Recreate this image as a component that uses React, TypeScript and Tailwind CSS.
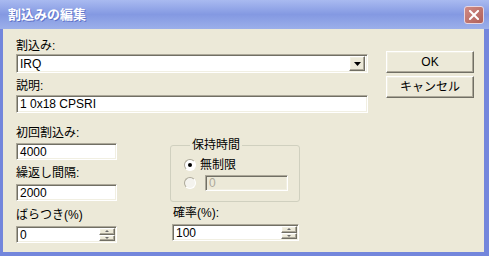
import React from "react";

const font = { fontFamily: '"Liberation Sans", "Noto Sans CJK JP", sans-serif' };

const sunken =
  "border border-t-[#ACA899] border-l-[#ACA899] border-b-white border-r-white shadow-[inset_1px_1px_0_#716F64,inset_-1px_-1px_0_#F1EFE2]";
const raised =
  "border border-t-white border-l-white border-b-[#716F64] border-r-[#716F64] shadow-[inset_-1px_-1px_0_#ACA899,inset_1px_1px_0_#F1EFE2] bg-[#ECE9D8]";

function Label({ children, className = "" }: { children: React.ReactNode; className?: string }) {
  return <div className={`h-[14px] text-[12px] leading-[14px] text-black whitespace-nowrap ${className}`}>{children}</div>;
}

function Field({ value, className = "", disabled = false, children }: any) {
  return (
    <div
      className={`flex items-center pl-[3px] text-[12px] ${disabled ? "bg-[#ECE9D8] text-[#ACA899]" : "bg-white text-black"} ${sunken} ${className}`}
    >
      <span className="flex-1 leading-[14px]">{value}</span>
      {children}
    </div>
  );
}

function Spinner() {
  return (
    <div className="mr-[1px] flex h-full w-[16px] flex-col py-[1px]">
      <div className={`flex flex-1 items-center justify-center ${raised}`}>
        <div className="h-0 w-0 border-x-[2px] border-b-[2px] border-x-transparent border-b-[#6b6b6b]" />
      </div>
      <div className={`flex flex-1 items-center justify-center ${raised}`}>
        <div className="h-0 w-0 border-x-[2px] border-t-[2px] border-x-transparent border-t-[#6b6b6b]" />
      </div>
    </div>
  );
}

function Radio({ checked = false, disabled = false }: { checked?: boolean; disabled?: boolean }) {
  return (
    <div
      className={`flex h-[12px] w-[12px] items-center justify-center rounded-full border border-t-[#ACA899] border-l-[#ACA899] border-b-white border-r-white ${disabled ? "bg-[#F4F3EE]" : "bg-white"}`}
    >
      {checked && <div className="h-[4px] w-[4px] rounded-full bg-black" />}
    </div>
  );
}

function Button({ children, className = "" }: { children: React.ReactNode; className?: string }) {
  return (
    <div className={`flex h-[22px] w-[88px] items-center justify-center text-[12px] text-black ${raised} ${className}`}>
      {children}
    </div>
  );
}

export default function App() {
  return (
    <div className="flex h-[256px] w-[489px] flex-col overflow-hidden bg-[#ECE9D8]" style={font}>
      {/* title bar */}
      <div className="flex h-[29px] items-center bg-gradient-to-b from-[#A9BAF0] via-[#8499E2] to-[#9CAFEA] pl-[8px] pr-[5px]">
        <span className="flex-1 text-[13px] font-bold text-white [text-shadow:1px_1px_0_#5F72C8]">割込みの編集</span>
        <div className="flex h-[18px] w-[20px] items-center justify-center rounded-[3px] border border-[#E8D6E0] bg-gradient-to-br from-[#D08A84] to-[#B0605A]">
          <svg width="10" height="10" viewBox="0 0 10 10">
            <path d="M1 1 L9 9 M9 1 L1 9" stroke="white" strokeWidth="2" strokeLinecap="square" />
          </svg>
        </div>
      </div>

      {/* body */}
      <div className="flex flex-1 border-b-[4px] border-l-[3px] border-r-[5px] border-[#7386DC]">
        <div className="flex flex-1 flex-col pl-[13px] pt-[10px]">
          <div className="flex">
            <div className="flex w-[352px] flex-col">
              <Label>割込み:</Label>
              <Field value="IRQ" className="mt-[1px] h-[19px]">
                <div className={`mr-[2px] flex h-[15px] w-[16px] items-center justify-center ${raised}`}>
                  <svg width="7" height="4" viewBox="0 0 7 4">
                    <path d="M0 0 H7 L3.5 4 Z" fill="black" />
                  </svg>
                </div>
              </Field>
              <Label className="mt-[6px]">説明:</Label>
              <Field value="1 0x18 CPSRI" className="mt-[2px] h-[18px]" />
            </div>
            <div className="ml-[18px] flex flex-col gap-[3px] pt-[12px]">
              <Button>OK</Button>
              <Button>キャンセル</Button>
            </div>
          </div>

          <div className="mt-[13px] flex">
            <div className="flex w-[101px] flex-col">
              <Label>初回割込み:</Label>
              <Field value="4000" className="mt-[3px] h-[17px]" />
              <Label className="mt-[6px]">繰返し間隔:</Label>
              <Field value="2000" className="mt-[4px] h-[17px]" />
              <Label className="mt-[7px]">ばらつき(%)</Label>
              <Field value="0" className="mt-[4px] h-[17px]">
                <Spinner />
              </Field>
            </div>

            <div className="ml-[53px] flex w-[130px] flex-col">
              <fieldset className="mt-[12px] h-[64px] rounded-[3px] border border-[#D0D0BF] pl-[13px]">
                <legend className="ml-[6px] px-[2px] text-[12px] leading-[14px] text-black">保持時間</legend>
                <div className="mt-[6px] flex h-[14px] items-center gap-[4px]">
                  <Radio checked />
                  <span className="text-[12px] leading-[14px]">無制限</span>
                </div>
                <div className="mt-[3px] flex items-center gap-[9px]">
                  <Radio disabled />
                  <Field value="0" disabled className="h-[16px] w-[83px]" />
                </div>
              </fieldset>
              <Label className="ml-[3px] mt-[4px]">確率(%):</Label>
              <Field value="100" className="ml-[2px] mt-[4px] h-[17px] w-[127px]">
                <Spinner />
              </Field>
            </div>
          </div>
        </div>
      </div>
    </div>
  );
}
